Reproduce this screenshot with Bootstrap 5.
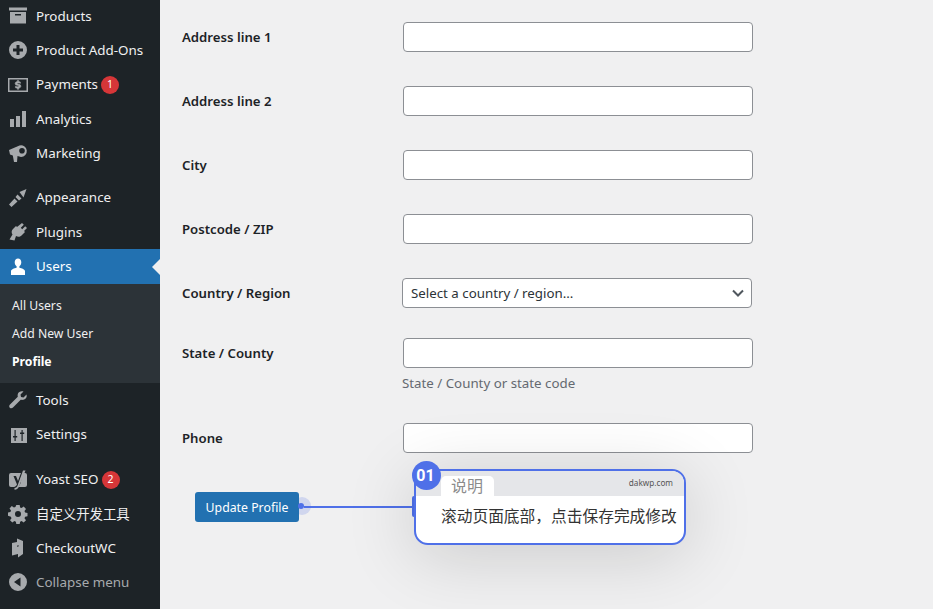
<!DOCTYPE html>
<html lang="en"><head><meta charset="utf-8"><title>Profile</title>
<link href="https://cdn.jsdelivr.net/npm/bootstrap@5.3.0/dist/css/bootstrap.min.css" rel="stylesheet">
<style>
html,body{height:100%;overflow:hidden}
body{background:#f0f0f1;color:#1d2327;font:13.3px/1.4 "Noto Sans","Noto Sans CJK SC",sans-serif}
.wp-shell{width:933px;height:609px;position:relative;overflow:hidden}
.wp-side{width:160px;flex:none;background:#1d2327;color:#f0f0f1;margin-top:-1px;height:610px;overflow:hidden;font-size:13.4px}
.wp-item{height:34.3px;display:flex;align-items:center;gap:8px;padding-left:8px;color:#f0f0f1;text-decoration:none;position:relative}
.wp-item svg{width:20px;height:20px;flex:none;fill:#a7aaad}
.wp-gap{height:10.2px}
.wp-gap-b{height:10.6px}
.wp-cur{background:#2271b1;color:#fff;height:35px}
.wp-cur svg{fill:#fff}
.wp-cur:after{content:"";position:absolute;right:0;top:10px;border:8px solid transparent;border-right-color:#f0f0f1;border-left-width:0}
.wp-sub{background:#2c3338;height:99px;padding-top:7.500px}
.wp-sub a{display:flex;align-items:center;height:28px;padding-left:12px;color:#c3c4c7cc;text-decoration:none;font-size:12.2px}
.wp-sub a.on{color:#fff;font-weight:700}
.wp-bub{background:#d63638;color:#fff;border-radius:50%;width:18px;height:18px;font-size:10.5px;display:inline-flex;align-items:center;justify-content:center;margin-left:-5px}
.wp-mute{color:#a7aaad}
.wp-main{flex:1;padding:22px 0 0 22px}
.wp-row{display:flex;align-items:flex-start;height:64px}
.wp-row-sel{height:60px}
.wp-row-state{height:85px}
.wp-lab{width:221px;flex:none;font-weight:600;line-height:30px;margin:0;color:#1d2327;font-size:13.2px}
.wp-inp{width:350px;height:30px;border:1px solid #8c8f94;border-radius:4px;background:#fff;display:block}
.wp-sel{width:350px;height:30px;border:1px solid #8c8f94;border-radius:4px;background:#fff;margin-left:-1px;padding:0 6px 0 8px;display:flex;align-items:center;justify-content:space-between;color:#2c3338}
.wp-desc{color:#646970;margin:5px 0 0 -1px;line-height:20px}
.wp-btn{background:#2271b1;color:#fff;border:0;border-radius:3px;width:104px;height:30px;padding:1px 0 0;font-size:12.3px;margin:5px 0 0 13px;display:block;position:relative;z-index:2}
.cb-box{position:absolute;left:414px;top:469px;width:272px;height:76px;border:2px solid #4f70e8;border-radius:14px;background:#fff;box-shadow:0 10px 70px rgba(0,0,0,.16)}
.cb-head{height:25px;background:#e5e6e9;border-radius:12px 12px 0 0;position:relative}
.cb-tab{position:absolute;left:25px;top:5px;width:53px;height:20px;background:#fff;border-radius:5px 5px 0 0;color:#8c8c8c;font-size:16px;line-height:21px;padding-left:10px}
.cb-site{position:absolute;right:11px;top:6px;font-size:8.200px;line-height:12px;color:#555}
.cb-text{font-size:15.73px;line-height:20px;padding:10px 0 0 25px;color:#333;white-space:nowrap}
.cb-num{position:absolute;left:412px;top:461px;width:29px;height:29px;border-radius:50%;background:#4f70e8;color:#fff;font:700 16px/29px Roboto,sans-serif;text-align:center;padding-right:2px}
.cb-line{position:absolute;left:304px;top:506px;width:111px;height:2px;background:#4f70e8}
.cb-stub{position:absolute;left:412px;top:496px;width:3px;height:21px;background:#4f70e8;border-radius:2px 0 0 2px}
.cb-halo{position:absolute;left:293px;top:497px;width:18px;height:18px;border-radius:50%;background:rgba(79,112,232,.2)}
.cb-dot{position:absolute;left:298px;top:503px;width:6px;height:6px;border-radius:50%;background:#4f70e8;z-index:3}
.wp-dollar{stroke:#a7aaad;stroke-width:.5}
</style></head><body>
<div class="wp-shell d-flex">
<nav class="wp-side">
<a class="wp-item"><svg viewBox="0 0 20 20"><path fill-rule="evenodd" d="M1 1.500h18v3H1zM2 6h16v11.500H2zM7 8v1.500h6V8z"/></svg>Products</a>
<a class="wp-item"><svg viewBox="0 0 20 20"><path fill-rule="evenodd" d="M10 1a9 9 0 1 1 0 18 9 9 0 0 1 0-18zM8.500 5v3.500H5v3h3.500V15h3v-3.500H15v-3h-3.500V5z"/></svg>Product Add-Ons</a>
<a class="wp-item"><svg viewBox="0 0 20 20"><path fill-rule="evenodd" d="M0 3h20v14H0zM1.500 4.500v11h17v-11z"/><path class="wp-dollar" d="M9.300 5.500v1c-1.300.2-2.200 1-2.200 2.100 0 2.300 3.600 1.500 3.600 2.600 0 .6-1.900.6-3.300 0v1.500c.5.200 1.200.4 1.900.5v1.100h1.400v-1.100c1.300-.2 2.200-1 2.200-2.100 0-2.300-3.600-1.600-3.600-2.600 0-.6 1.700-.6 3.100-.1V7c-.5-.2-1-.4-1.700-.4v-1.100z"/></svg><span>Payments</span><span class="wp-bub">1</span></a>
<a class="wp-item"><svg viewBox="0 0 20 20"><path d="M2 10h4v8H2zM8 7h4v11H8zM14 2h4v16h-4z"/></svg>Analytics</a>
<a class="wp-item"><svg viewBox="0 0 20 20"><path fill-rule="evenodd" d="M1 7 11.500 2.500a5.800 5.800 0 1 1 1.500 11.400L9.500 13 9 19H6L4.800 12.500 2 11.500zM14 5a2.800 2.800 0 1 0 0 5.600A2.800 2.800 0 0 0 14 5z"/></svg>Marketing</a>
<div class="wp-gap"></div>
<a class="wp-item"><svg viewBox="0 0 20 20"><path d="M11.500 4 18.500 1 15.500 9.500zM9.500 6.500 13.500 10.500 11 12.500 7.500 9zM6.500 10.500 9.500 13.500 3.500 19 1 16.500z"/></svg>Appearance</a>
<a class="wp-item"><svg viewBox="0 0 20 20"><path d="M14 1l1.800 1.800-3 3 1.400 1.400 3-3L19 6l-3 3 1 1-3.500 3.500c-1.700 1.700-4 1.500-5.500.5l-1.500 4.500-5-1 3-5c-1.200-1.500-1.200-3.800.5-5.500L8 4l1 1z"/></svg>Plugins</a>
<a class="wp-item wp-cur"><svg viewBox="0 0 20 20"><path d="M10 1.500c1.900 0 3.300 1.700 3.300 3.800 0 1.900-.8 3.300-1.900 4v1.500c2.300.7 5.600 1.400 5.600 3.500v3.700H3v-3.700c0-2.100 3.300-2.800 5.600-3.500V9.300c-1.100-.7-1.900-2.100-1.900-4 0-2.100 1.400-3.800 3.300-3.800z"/></svg>Users</a>
<div class="wp-sub"><a>All Users</a><a>Add New User</a><a class="on">Profile</a></div>
<a class="wp-item"><svg viewBox="0 0 20 20"><path d="M18.500 4.500 15.500 7.500 13 7l-.5-2.500 3-3C13 .8 10.500 1.800 9.800 4c-.3 1-.2 2 0 2.800L2 14.500c-1 1-1 2.300-.2 3.200.9.900 2.300.8 3.200-.2l7.700-7.700c.9.200 1.900.2 2.800 0 2.500-.8 3.800-3 3-5.300z"/></svg>Tools</a>
<a class="wp-item"><svg viewBox="0 0 20 20"><path fill-rule="evenodd" d="M3 3h16v15H3zM6.500 5v6H5v1.500h1.500V16h1.200v-3.500h1.500V11H7.700V5zM13.500 5v2.500H12V9h1.500v7h1.200V9h1.500V7.500h-1.500V5z"/></svg>Settings</a>
<div class="wp-gap-b"></div>
<a class="wp-item"><svg viewBox="0 0 20 20"><path fill-rule="evenodd" d="M3 3h10l-1 2.500L10 11 8 6H5.500l3.500 8.500c-.5 1.300-1.200 2-2.800 2.500H3a2 2 0 0 1-2-2V5a2 2 0 0 1 2-2zM14.500 3H17a2 2 0 0 1 2 2v10a2 2 0 0 1-2 2h-7c1.500-1 2-2.500 2.700-4.200z"/><path d="M15 .5h2.500L11 16.500c-.7 2-2 3-4.500 3.300V18c1.700-.2 2.500-1 3.100-2.500z"/></svg><span>Yoast SEO</span><span class="wp-bub">2</span></a>
<a class="wp-item"><svg viewBox="0 0 20 20"><path fill-rule="evenodd" d="M8.300 1h3.400l.4 2.500 1.500.6 2.100-1.500 2.300 2.300-1.500 2.100.6 1.500 2.400.4v3.400l-2.400.4-.6 1.500 1.500 2.100-2.300 2.300-2.100-1.500-1.500.6-.4 2.300H8.300l-.4-2.300-1.500-.6-2.100 1.500-2.300-2.300 1.500-2.100-.6-1.500L0 11.800V8.400l2.400-.4.6-1.500-1.500-2.100 2.300-2.300 2.100 1.500 1.500-.6zM10 7a3 3 0 1 0 0 6 3 3 0 0 0 0-6z"/></svg>自定义开发工具</a>
<a class="wp-item"><svg viewBox="0 0 20 20"><path d="M4 5l5-1V.5L15 3v13l-5 3.500V16l-6 1.500zM9.300 7.500v1.500l1.200-.4V7z"/></svg>CheckoutWC</a>
<a class="wp-item wp-mute"><svg viewBox="0 0 20 20"><path fill-rule="evenodd" d="M10 1a9 9 0 1 1 0 18 9 9 0 0 1 0-18zM12.500 5.500 6 10l6.500 4.500z"/></svg>Collapse menu</a>
</nav>
<main class="wp-main">
<div class="wp-row"><label class="wp-lab">Address line 1</label><div class="wp-inp"></div></div>
<div class="wp-row"><label class="wp-lab">Address line 2</label><div class="wp-inp"></div></div>
<div class="wp-row"><label class="wp-lab">City</label><div class="wp-inp"></div></div>
<div class="wp-row"><label class="wp-lab">Postcode / ZIP</label><div class="wp-inp"></div></div>
<div class="wp-row wp-row-sel"><label class="wp-lab">Country / Region</label><div class="wp-sel"><span>Select a country / region...</span><svg width="14" height="14" viewBox="0 0 14 14" fill="none" stroke="#50575e" stroke-width="2"><path d="M2 4.500 7 9.500 12 4.500"/></svg></div></div>
<div class="wp-row wp-row-state"><label class="wp-lab">State / County</label><div><div class="wp-inp"></div><p class="wp-desc">State / County or state code</p></div></div>
<div class="wp-row"><label class="wp-lab">Phone</label><div class="wp-inp"></div></div>
<button class="wp-btn" type="button">Update Profile</button>
</main>
<div class="cb-line"></div><div class="cb-halo"></div><div class="cb-dot"></div><div class="cb-stub"></div>
<div class="cb-box"><div class="cb-head"><div class="cb-tab">说明</div><div class="cb-site">dakwp.com</div></div><div class="cb-text">滚动页面底部，点击保存完成修改</div></div>
<div class="cb-num">01</div>
</div>
</body></html>
